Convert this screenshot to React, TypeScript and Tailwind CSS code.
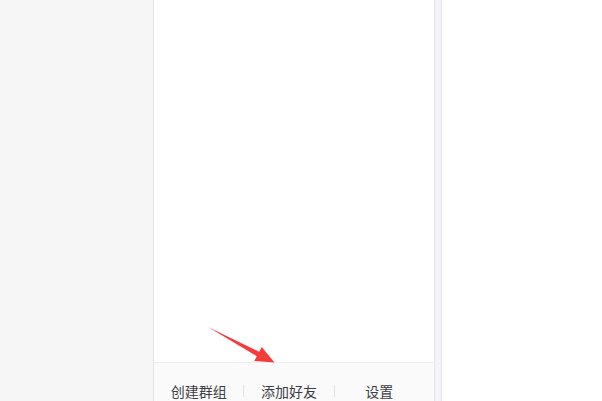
import React from 'react';

// footer actions of the contact panel
const actions = ['创建群组', '添加好友', '设置'];

const Arrow = () => (
  <svg
    className="absolute left-0 top-0 pointer-events-none"
    width="602"
    height="401"
    viewBox="0 0 602 401"
  >
    <polygon
      points="208,327 259.2,351.8 261.8,347 274.5,362.5 254.2,361 256.8,356.2"
      fill="#f43c3c"
    />
  </svg>
);

const App = () => {
  return (
    <div
      className="relative flex h-[401px] w-[602px] items-start overflow-hidden bg-white"
      style={{ fontFamily: '"Noto Sans CJK SC", "Noto Sans", sans-serif' }}
    >
      {/* left column */}
      <div className="h-full w-[153px] shrink-0 bg-[#f6f6f6]"></div>

      {/* main panel */}
      <div className="flex w-[282px] shrink-0 flex-col border-x border-[#e2e3ec] bg-white">
        <div className="h-[362px] shrink-0"></div>
        <div className="h-[60px] border-t border-[#efeff2] bg-[#fafafa] pr-[10px] pt-[18px]">
          <div className="flex items-center">
            {actions.map((label, i) => (
              <React.Fragment key={label}>
                {i > 0 && <div className="h-3 w-px bg-[#e3e3e6]"></div>}
                <div className="flex-1 text-center text-[14px] leading-5 text-[#3b3e45]">
                  {label}
                </div>
              </React.Fragment>
            ))}
          </div>
        </div>
      </div>

      {/* scrollbar strip */}
      <div className="h-full w-[7px] shrink-0 border-r border-[#e2e3ec] bg-[#f4f4f7]"></div>

      <div className="h-full flex-1 bg-white"></div>

      <Arrow />
    </div>
  );
};

export default App;
